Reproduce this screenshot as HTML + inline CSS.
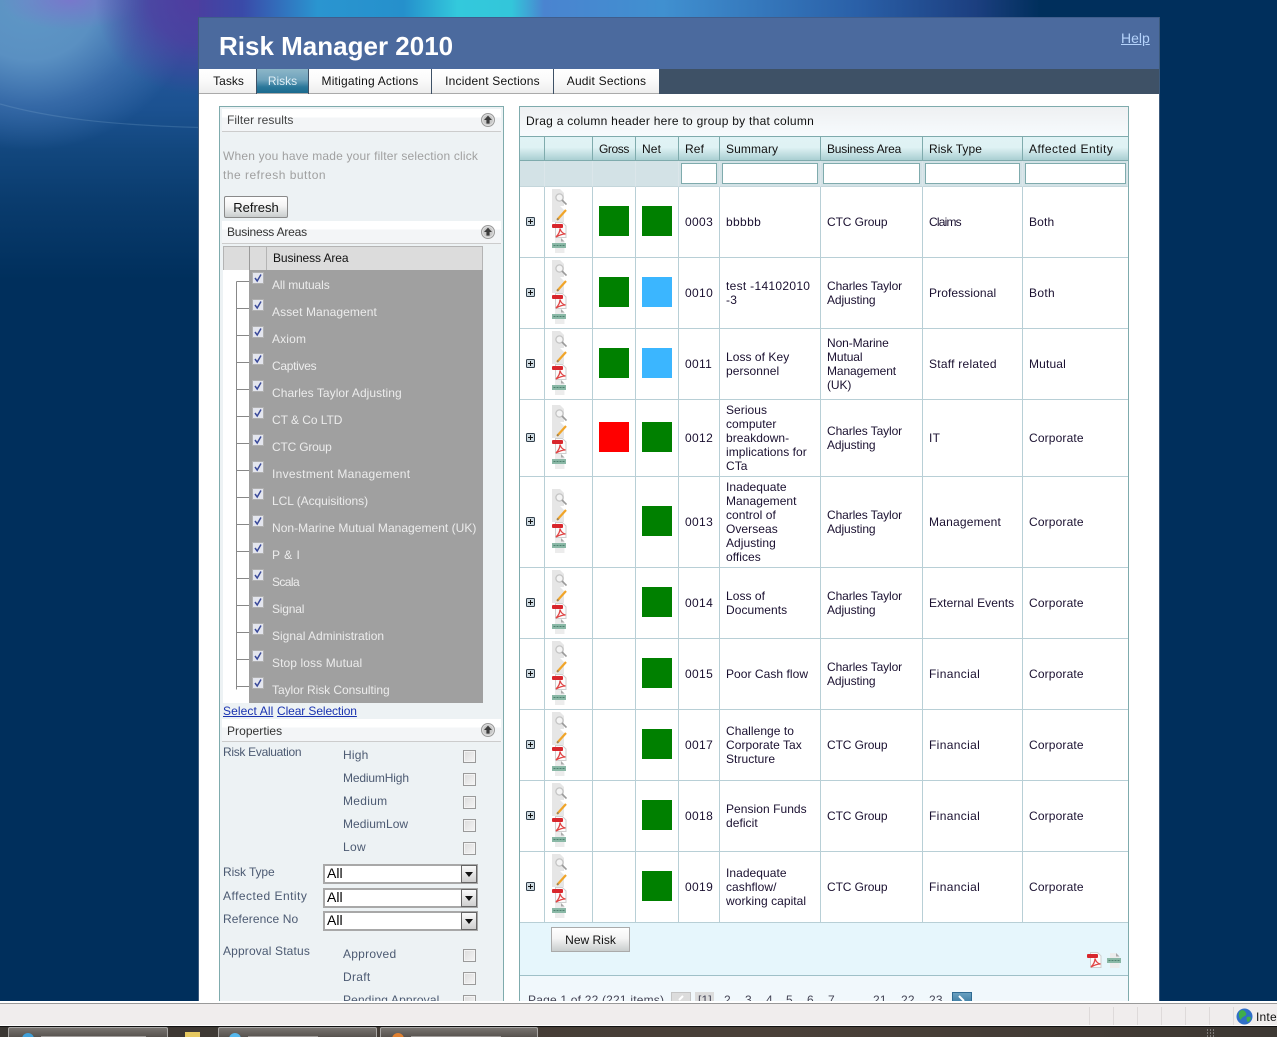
<!DOCTYPE html>
<html><head><meta charset="utf-8"><title>Risk Manager 2010</title>
<style>
html,body{margin:0;padding:0;width:1277px;height:1037px;overflow:hidden;background:#002f5c}
body{font:12px/14px "Liberation Sans",sans-serif;letter-spacing:.2px;color:#222;position:relative}
.a{position:absolute}
.t{position:absolute;white-space:nowrap;line-height:14px}
#left{left:0;top:0;width:199px;height:1001px;background:radial-gradient(ellipse 100px 95px at 195px 0,#4f3da0 0,rgba(79,61,160,.8) 45%,rgba(79,61,160,0) 100%),radial-gradient(ellipse 70px 30px at 70px 0,rgba(125,115,205,.85) 0,rgba(125,115,205,0) 100%),radial-gradient(ellipse 165px 150px at 30px 0,#5f98c6 0,#5a90c2 40%,rgba(75,125,185,.55) 70%,rgba(75,125,185,0) 100%),linear-gradient(#2c5fa6 0,#1b5190 110px,#12477e 150px,#0a3c6e 200px,#002f5c 280px)}
#strip{left:199px;top:0;width:1078px;height:17px;background:linear-gradient(90deg,#4a3fa0 0,#3a4aa8 4%,#2a95d0 11%,#2590cc 19%,#33c9dc 24%,#33c6da 29%,#4a84d0 32%,#4090d0 43%,#2a60a8 61%,#1c3f80 72%,#002f5c 78%)}
#page{left:198px;top:17px;width:962px;height:984px;background:#fff;border-left:1px solid #3c5a7c;border-right:1px solid #3c5a7c;box-sizing:border-box}
#hd{left:199px;top:17px;width:960px;height:52px;background:#4b6a9e;border-top:1px solid #3f5d8c;box-sizing:border-box}
#title{left:219px;top:30px;font-weight:bold;font-size:26px;line-height:32px;color:#fff;letter-spacing:0}
#help{left:1121px;top:31px;font-size:14px;color:#b5d3fb;text-decoration:underline;letter-spacing:0}
#tb{left:199px;top:69px;width:960px;height:25px;background:#3e5166}
.tab{position:absolute;top:69px;height:24px;line-height:25px;text-align:center;background:linear-gradient(#fff 0,#fafafa 50%,#eee 100%);border-bottom:1px solid #aaa;letter-spacing:.2px;color:#111}
.tab.on{background:linear-gradient(#8cb6c8 0,#6fa3bc 45%,#2a779a 75%,#1b6a8e 100%);color:#dfeef5}
#lp{left:219px;top:106px;width:285px;height:900px;box-sizing:border-box;background:#edf2f4;border:1px solid #7fabad}
.sh{position:absolute;left:222px;width:279px;height:23px;box-sizing:border-box;background:linear-gradient(#fff 0,#fff 38%,#f3f5f7 38%,#f3f5f7 100%);border-bottom:1px solid #ccc}
.col{position:absolute;left:481px}
.hint{color:#a0a0a0}
.lbl{color:#4c5a72}
.btn{position:absolute;box-sizing:border-box;border:1px solid #8a8a8a;border-radius:2px;background:linear-gradient(#fff 0,#f4f4f4 45%,#c9cdcd 100%);text-align:center;color:#111;letter-spacing:0}
.ck{position:absolute;left:463px;width:13px;height:13px;box-sizing:border-box;border:1px solid #9a9a9a;background:linear-gradient(135deg,#dcdcdc,#f5f5f5);box-shadow:inset 0 0 0 1px #f4f4f4}
.sel{position:absolute;left:323px;width:155px;height:20px;box-sizing:border-box;background:#fff;border:2px solid #a8a8a8;font-size:14px;line-height:15px;padding-left:2px;color:#000;letter-spacing:0}
.sel i{position:absolute;right:-1px;top:-1px;width:16px;height:18px;background:linear-gradient(#fafafa,#cfcfcf);border:1px solid #666;box-sizing:border-box}
.sel i:after{content:"";position:absolute;left:3px;top:6px;border:4px solid transparent;border-top:5px solid #111;border-bottom:0}
#grid{position:absolute;left:223px;top:270px;width:26px;height:433px;background:#fff}
#rp{left:519px;top:106px;width:610px;height:900px;box-sizing:border-box;background:#fff;border:1px solid #7fabad}
#grp{left:520px;top:107px;width:608px;height:29px;background:linear-gradient(#eef0f2,#f7fbfd);border-bottom:1px solid #7fabad;line-height:29px;color:#111;letter-spacing:.27px}
table{position:absolute;left:520px;top:137px;width:608px;table-layout:fixed;border-collapse:separate;border-spacing:0}
td,th{padding:0 0 0 6px;box-sizing:border-box;vertical-align:middle;font-weight:normal;text-align:left;border-right:1px solid #b8cfd6;border-bottom:1px solid #b8cfd6;color:#1a1030;overflow:hidden;white-space:nowrap}
td:last-child,th:last-child{border-right:0}
tr.h th{height:24px;background:linear-gradient(#e0f3f5 0,#dff2f4 45%,#aacfd2 100%);border-bottom:1px solid #7fabad;border-right:1px solid #7fabad;color:#111;letter-spacing:.12px}
tr.h th:last-child{border-right:0;letter-spacing:.48px}
tr.f td{height:26px;background:#d3e2e6;padding:0;position:relative;border-right:1px solid #dbe6ea;border-bottom:1px solid #c4d6db}
tr.f b{position:absolute;top:2px;left:2px;height:21px;background:#fff;border:1px solid #7fabad;box-sizing:border-box}
tr.r td{height:71px}
tr.r td:nth-child(5){letter-spacing:.35px}
tr.r td:nth-child(6){letter-spacing:.05px}
tr.r td:nth-child(7){letter-spacing:-.1px}
tr.r td:nth-child(8){letter-spacing:.3px}
tr.r td:nth-child(9){letter-spacing:.15px}
.sq{display:block;width:30px;height:30px;position:relative;top:-1px}
.g{background:#008000}.b{background:#3bb6ff}.x{background:#ff0000}
.exp{display:block;width:9px;height:9px;position:relative;top:-1px}
td.ic{padding:0 0 0 7px}
.st{display:block;width:15px;height:64px;position:relative;top:-1px}
#cmd{left:520px;top:923px;width:608px;height:52px;background:#e6f6fc;border-bottom:1px solid #9fc0c8}
#pg{left:520px;top:976px;width:608px;height:26px;background:#f1f8fc}
#sb{left:0;top:1001px;width:1277px;height:26px;box-sizing:border-box;background:#f0eded;border-top:2px solid #fff}
#sb:before{content:"";position:absolute;left:0;top:0;width:100%;height:1px;background:#999}
#sb u{position:absolute;top:4px;width:1px;height:19px;background:#dedada}
#sb:after{content:"";position:absolute;left:0;bottom:0;width:100%;height:2px;background:#fff}
#tk{left:0;top:1026px;width:1277px;height:11px;background:linear-gradient(90deg,#3a3632,#4a4038 60%,#3d3833);border-top:1px solid #111;box-sizing:border-box}
.tb{position:absolute;top:0;height:12px;box-sizing:border-box;background:linear-gradient(#77736f,#504b47);border:1px solid #a8a6a4;border-bottom:0;border-radius:2px 2px 0 0}
.tb s{position:absolute;top:8px;height:2px;background:#d8d6d4;opacity:.55}
.tb em{position:absolute;top:5px;width:12px;height:6px;border-radius:6px 6px 0 0}
</style></head><body>
<svg width="0" height="0" style="position:absolute">
<defs>
<symbol id="c" viewBox="0 0 14 14"><circle cx="7" cy="7" r="6.500" fill="#e0e0e0" stroke="#9a9a9a"/><circle cx="7" cy="7" r="5" fill="#c8c8c8"/><path d="M7 2.600L11 7H8.600v3.600H5.400V7H3z" fill="#3c3c3c"/></symbol>
<symbol id="k" viewBox="0 0 12 12"><rect x=".5" y=".5" width="11" height="11" fill="#e4e6ee" stroke="#b0b0b0"/><path d="M3 6l2.200 3L9 2.500" fill="none" stroke="#3a4a9a" stroke-width="1.500"/></symbol>
<symbol id="p" viewBox="0 0 9 9"><rect x=".5" y=".5" width="8" height="8" rx="1" fill="#cfdbe2" stroke="#33404c"/><path d="M2 4.500h5M4.500 2v5" stroke="#111" stroke-width="1"/></symbol>
<symbol id="dp" viewBox="0 0 15 16"><path d="M3.500.5h7l3.500 3.500v11.500H3.500z" fill="#fbfbfb" stroke="#cfcfcf"/><rect x="0" y="2" width="11" height="4" rx="1" fill="#d8262c"/><path d="M4 15C7 12 8 9 8 6.500c1 3.500 2.500 5 5.500 5.500-3 0-6 1-9.500 3z" fill="none" stroke="#e04545" stroke-width="1.300"/></symbol>
<symbol id="dx" viewBox="0 0 15 15"><path d="M3 0h6l3.500 3.500V15H3z" fill="#ececec"/><path d="M9 0v3.500h3.500z" fill="#aaa"/><rect x="0" y="5" width="14" height="5" fill="#8ab8a6"/><path d="M1.500 7.500h11" stroke="#4f8270" stroke-dasharray="2 1"/></symbol>
<symbol id="st" viewBox="0 0 15 64">
<path d="M0 0h8l4 4v13H0z" fill="#e6e6e6"/><circle cx="7.500" cy="8.500" r="3.600" fill="#f4f4f4" stroke="#c4c4c4" stroke-width="1.300"/><path d="M10 11l4.500 4.500" stroke="#9a9a9a" stroke-width="1.600"/>
<path d="M0 17h8l4 4v12H0z" fill="#e6e6e6"/><path d="M5 31l9-10" stroke="#f0a428" stroke-width="2.200"/><path d="M5 31l2.200-.600-1.700-1.600z" fill="#777"/>
<path d="M3.500 33.500h7l3.500 3.500v11.500H3.500z" fill="#fbfbfb" stroke="#cfcfcf"/><rect x="0" y="35" width="11" height="4" rx="1" fill="#d8262c"/><path d="M4 48C7 45 8 42 8 39.500c1 3.500 2.500 5 5.500 5.500-3 0-6 1-9.500 3z" fill="none" stroke="#e04545" stroke-width="1.300"/>
<path d="M3 49h6l3.500 3.500V64H3z" fill="#ececec"/><path d="M9 49v3.500h3.500z" fill="#aaa"/><rect x="0" y="54" width="14" height="5" fill="#8ab8a6"/><path d="M1.500 56.500h11" stroke="#4f8270" stroke-dasharray="2 1"/>
</symbol>
</defs>
</svg>
<div class="a" id="left"></div>
<svg class="a" style="left:0;top:0" width="199" height="140"><path d="M0 104C50 118 110 125 199 127.500" fill="none" stroke="#8cb4d8" stroke-opacity=".22" stroke-width="1.200"/></svg>
<div class="a" id="strip"></div>
<div class="a" id="page"></div>
<div class="a" id="hd"></div>
<div class="t" id="title">Risk Manager 2010</div>
<div class="t" id="help">Help</div>
<div class="a" id="tb"></div>
<div class="tab" style="left:199px;width:57px;padding-left:2px;box-sizing:border-box;height:25px;letter-spacing:0">Tasks</div>
<div class="tab on" style="left:257px;width:51px;letter-spacing:0">Risks</div>
<div class="tab" style="left:309px;width:122px">Mitigating Actions</div>
<div class="tab" style="left:432px;width:121px">Incident Sections</div>
<div class="tab" style="left:554px;width:105px">Audit Sections</div>

<div class="a" id="lp"></div>
<div class="sh" style="top:109px"></div><div class="t" style="left:227px;top:113px;color:#444;letter-spacing:.08px">Filter results</div>
<svg class="col" style="top:113px" width="14" height="14"><use href="#c"/></svg>
<div class="t hint" style="left:223px;top:149px;letter-spacing:.18px">When you have made your filter selection click</div>
<div class="t hint" style="left:223px;top:168px;letter-spacing:.5px">the refresh button</div>
<div class="btn" style="left:224px;top:196px;width:64px;height:22px;line-height:22px;font-size:13px">Refresh</div>
<div class="sh" style="top:221px"></div><div class="t" style="left:227px;top:225px;color:#333;letter-spacing:-.2px">Business Areas</div>
<svg class="col" style="top:225px" width="14" height="14"><use href="#c"/></svg>
<div class="a" style="left:223px;top:246px;width:260px;height:24px;background:#dcdcdc;box-sizing:border-box;border:1px solid #b4b4b4;border-bottom:0"></div>
<div class="a" style="left:249px;top:246px;width:1px;height:24px;background:#9a9a9a"></div>
<div class="a" style="left:266px;top:246px;width:1px;height:24px;background:#b4b4b4"></div>
<div class="t" style="left:273px;top:251px;color:#111;letter-spacing:-.1px">Business Area</div>
<div id="grid"></div>
<div class="a" style="left:249px;top:270px;width:234px;height:433px;background:#a0a0a0"></div>
<svg class="a" style="left:223px;top:270px" width="30" height="433"><path d="M13.500 11.500V419.500M13.500 11.500H26M13.500 38.500H26M13.500 65.500H26M13.500 92.500H26M13.500 119.500H26M13.500 146.500H26M13.500 173.500H26M13.500 200.500H26M13.500 227.500H26M13.500 254.500H26M13.500 281.500H26M13.500 308.500H26M13.500 335.500H26M13.500 362.500H26M13.500 389.500H26M13.500 416.500H26" fill="none" stroke="#888"/></svg>
<svg class="a" style="left:252px;top:272px" width="12" height="420">
<use href="#k" y="0" width="12" height="12"/><use href="#k" y="27" width="12" height="12"/><use href="#k" y="54" width="12" height="12"/><use href="#k" y="81" width="12" height="12"/><use href="#k" y="108" width="12" height="12"/><use href="#k" y="135" width="12" height="12"/><use href="#k" y="162" width="12" height="12"/><use href="#k" y="189" width="12" height="12"/><use href="#k" y="216" width="12" height="12"/><use href="#k" y="243" width="12" height="12"/><use href="#k" y="270" width="12" height="12"/><use href="#k" y="297" width="12" height="12"/><use href="#k" y="324" width="12" height="12"/><use href="#k" y="351" width="12" height="12"/><use href="#k" y="378" width="12" height="12"/><use href="#k" y="405" width="12" height="12"/>
</svg>
<div style="color:#ececec">
<div class="t" style="left:272px;top:278px;letter-spacing:-.1px">All mutuals</div>
<div class="t" style="left:272px;top:305px;letter-spacing:.1px">Asset Management</div>
<div class="t" style="left:272px;top:332px;letter-spacing:.15px">Axiom</div>
<div class="t" style="left:272px;top:359px;letter-spacing:-.3px">Captives</div>
<div class="t" style="left:272px;top:386px;letter-spacing:.05px">Charles Taylor Adjusting</div>
<div class="t" style="left:272px;top:413px;letter-spacing:-.05px">CT &amp; Co LTD</div>
<div class="t" style="left:272px;top:440px;letter-spacing:-.2px">CTC Group</div>
<div class="t" style="left:272px;top:467px;letter-spacing:.3px">Investment Management</div>
<div class="t" style="left:272px;top:494px;letter-spacing:-.05px">LCL (Acquisitions)</div>
<div class="t" style="left:272px;top:521px;letter-spacing:.03px">Non-Marine Mutual Management (UK)</div>
<div class="t" style="left:272px;top:548px;letter-spacing:.5px">P &amp; I</div>
<div class="t" style="left:272px;top:575px;letter-spacing:-.6px">Scala</div>
<div class="t" style="left:272px;top:602px;letter-spacing:-.2px">Signal</div>
<div class="t" style="left:272px;top:629px;letter-spacing:0">Signal Administration</div>
<div class="t" style="left:272px;top:656px;letter-spacing:.1px">Stop loss Mutual</div>
<div class="t" style="left:272px;top:683px;letter-spacing:-.05px">Taylor Risk Consulting</div>
</div>
<div class="t" style="left:223px;top:704px;color:#1a33b0;text-decoration:underline;letter-spacing:.1px">Select All</div>
<div class="t" style="left:277px;top:704px;color:#1a33b0;text-decoration:underline;letter-spacing:-.1px">Clear Selection</div>
<div class="sh" style="top:719px"></div><div class="t" style="left:227px;top:724px;color:#333;letter-spacing:.05px">Properties</div>
<svg class="col" style="top:723px" width="14" height="14"><use href="#c"/></svg>
<div class="lbl">
<div class="t" style="left:223px;top:745px;letter-spacing:-.3px">Risk Evaluation</div>
<div class="t" style="left:343px;top:748px">High</div>
<div class="t" style="left:343px;top:771px;letter-spacing:-.15px">MediumHigh</div>
<div class="t" style="left:343px;top:794px;letter-spacing:.3px">Medium</div>
<div class="t" style="left:343px;top:817px;letter-spacing:.05px">MediumLow</div>
<div class="t" style="left:343px;top:840px;letter-spacing:.3px">Low</div>
<div class="t" style="left:223px;top:865px;letter-spacing:-.1px">Risk Type</div>
<div class="t" style="left:223px;top:889px;letter-spacing:.48px">Affected Entity</div>
<div class="t" style="left:223px;top:912px;letter-spacing:.1px">Reference No</div>
<div class="t" style="left:223px;top:944px;letter-spacing:.15px">Approval Status</div>
<div class="t" style="left:343px;top:947px;letter-spacing:.25px">Approved</div>
<div class="t" style="left:343px;top:970px;letter-spacing:.3px">Draft</div>
<div class="t" style="left:343px;top:993px;letter-spacing:.15px">Pending Approval</div>
</div>
<div class="ck" style="top:750px"></div><div class="ck" style="top:773px"></div><div class="ck" style="top:796px"></div><div class="ck" style="top:819px"></div><div class="ck" style="top:842px"></div>
<div class="ck" style="top:949px"></div><div class="ck" style="top:972px"></div><div class="ck" style="top:995px"></div>
<div class="sel" style="top:864px">All<i></i></div>
<div class="sel" style="top:888px">All<i></i></div>
<div class="sel" style="top:911px">All<i></i></div>

<div class="a" id="rp"></div>
<div class="a" id="grp"><span style="margin-left:6px">Drag a column header here to group by that column</span></div>
<table>
<colgroup><col style="width:25px"><col style="width:48px"><col style="width:43px"><col style="width:43px"><col style="width:41px"><col style="width:101px"><col style="width:102px"><col style="width:100px"><col style="width:105px"></colgroup>
<tr class="h"><th></th><th></th><th style="letter-spacing:-.4px">Gross</th><th>Net</th><th>Ref</th><th>Summary</th><th style="letter-spacing:-.2px">Business Area</th><th style="letter-spacing:.05px">Risk Type</th><th>Affected Entity</th></tr>
<tr class="f"><td></td><td></td><td></td><td></td><td><b style="width:36px"></b></td><td><b style="width:96px"></b></td><td><b style="width:97px"></b></td><td><b style="width:95px"></b></td><td><b style="width:101px"></b></td></tr>
<tr class="r"><td><svg class="exp"><use href="#p"/></svg></td><td class="ic"><svg class="st"><use href="#st"/></svg></td><td><span class="sq g"></span></td><td><span class="sq g"></span></td><td>0003</td><td style="letter-spacing:.35px">bbbbb</td><td>CTC Group</td><td style="letter-spacing:-.8px">Claims</td><td>Both</td></tr>
<tr class="r"><td><svg class="exp"><use href="#p"/></svg></td><td class="ic"><svg class="st"><use href="#st"/></svg></td><td><span class="sq g"></span></td><td><span class="sq b"></span></td><td>0010</td><td style="letter-spacing:.3px">test -14102010<br>-3</td><td>Charles Taylor<br>Adjusting</td><td style="letter-spacing:.1px">Professional</td><td style="letter-spacing:.35px">Both</td></tr>
<tr class="r"><td><svg class="exp"><use href="#p"/></svg></td><td class="ic"><svg class="st"><use href="#st"/></svg></td><td><span class="sq g"></span></td><td><span class="sq b"></span></td><td>0011</td><td>Loss of Key<br>personnel</td><td>Non-Marine<br>Mutual<br>Management<br>(UK)</td><td style="letter-spacing:.25px">Staff related</td><td>Mutual</td></tr>
<tr class="r"><td style="height:77px"><svg class="exp"><use href="#p"/></svg></td><td class="ic" style="height:77px"><svg class="st"><use href="#st"/></svg></td><td style="height:77px"><span class="sq x"></span></td><td style="height:77px"><span class="sq g"></span></td><td style="height:77px">0012</td><td style="height:77px">Serious<br>computer<br>breakdown-<br>implications for<br>CTa</td><td style="height:77px">Charles Taylor<br>Adjusting</td><td style="height:77px">IT</td><td style="height:77px">Corporate</td></tr>
<tr class="r"><td style="height:91px"><svg class="exp"><use href="#p"/></svg></td><td class="ic" style="height:91px"><svg class="st"><use href="#st"/></svg></td><td style="height:91px"></td><td style="height:91px"><span class="sq g"></span></td><td style="height:91px">0013</td><td style="height:91px">Inadequate<br>Management<br>control of<br>Overseas<br>Adjusting<br>offices</td><td style="height:91px">Charles Taylor<br>Adjusting</td><td style="height:91px;letter-spacing:.2px">Management</td><td style="height:91px">Corporate</td></tr>
<tr class="r"><td><svg class="exp"><use href="#p"/></svg></td><td class="ic"><svg class="st"><use href="#st"/></svg></td><td></td><td><span class="sq g"></span></td><td>0014</td><td>Loss of<br>Documents</td><td>Charles Taylor<br>Adjusting</td><td style="letter-spacing:.08px">External Events</td><td>Corporate</td></tr>
<tr class="r"><td><svg class="exp"><use href="#p"/></svg></td><td class="ic"><svg class="st"><use href="#st"/></svg></td><td></td><td><span class="sq g"></span></td><td>0015</td><td>Poor Cash flow</td><td>Charles Taylor<br>Adjusting</td><td style="letter-spacing:.35px">Financial</td><td>Corporate</td></tr>
<tr class="r"><td><svg class="exp"><use href="#p"/></svg></td><td class="ic"><svg class="st"><use href="#st"/></svg></td><td></td><td><span class="sq g"></span></td><td>0017</td><td>Challenge to<br>Corporate Tax<br>Structure</td><td>CTC Group</td><td style="letter-spacing:.35px">Financial</td><td>Corporate</td></tr>
<tr class="r"><td><svg class="exp"><use href="#p"/></svg></td><td class="ic"><svg class="st"><use href="#st"/></svg></td><td></td><td><span class="sq g"></span></td><td>0018</td><td>Pension Funds<br>deficit</td><td>CTC Group</td><td style="letter-spacing:.35px">Financial</td><td>Corporate</td></tr>
<tr class="r"><td><svg class="exp"><use href="#p"/></svg></td><td class="ic"><svg class="st"><use href="#st"/></svg></td><td></td><td><span class="sq g"></span></td><td>0019</td><td>Inadequate<br>cashflow/<br>working capital</td><td>CTC Group</td><td style="letter-spacing:.35px">Financial</td><td>Corporate</td></tr>
</table>
<div class="a" id="cmd"></div>
<div class="btn" style="left:551px;top:927px;width:79px;height:25px;line-height:25px;border-color:#aaa;border-radius:0">New Risk</div>
<svg class="a" style="left:1087px;top:952px" width="15" height="16"><use href="#dp"/></svg>
<svg class="a" style="left:1107px;top:953px" width="15" height="15"><use href="#dx"/></svg>
<div class="a" id="pg"></div>
<div class="t" style="left:528px;top:993px;color:#445">Page 1 of 22 (221 items)</div>
<div class="a" style="left:671px;top:992px;width:20px;height:12px;box-sizing:border-box;background:#dcdcdc;border:1px solid #c4c4c4"></div>
<svg class="a" style="left:675px;top:995px" width="12" height="7"><path d="M8 1L4 5" stroke="#fff" stroke-width="2"/></svg>
<div class="a" style="left:695px;top:992px;width:19px;height:12px;background:#dcdcdc"></div>
<div class="t" style="left:698px;top:993px;color:#445">[1]</div>
<div class="t" style="left:724px;top:993px;color:#445">2</div>
<div class="t" style="left:745px;top:993px;color:#445">3</div>
<div class="t" style="left:766px;top:993px;color:#445">4</div>
<div class="t" style="left:786px;top:993px;color:#445">5</div>
<div class="t" style="left:807px;top:993px;color:#445">6</div>
<div class="t" style="left:828px;top:993px;color:#445">7</div>
<div class="t" style="left:873px;top:993px;color:#445">21</div>
<div class="t" style="left:901px;top:993px;color:#445">22</div>
<div class="t" style="left:929px;top:993px;color:#445">23</div>
<div class="a" style="left:952px;top:992px;width:20px;height:12px;box-sizing:border-box;background:linear-gradient(#6aa0c0,#3d7ca3);border:1px solid #2f6a92"></div>
<svg class="a" style="left:956px;top:995px" width="12" height="7"><path d="M3 1l5 5" stroke="#fff" stroke-width="2"/></svg>

<div class="a" id="sb">
<u style="left:1089px"></u><u style="left:1113px"></u><u style="left:1137px"></u><u style="left:1161px"></u><u style="left:1185px"></u><u style="left:1209px"></u><u style="left:1233px"></u>
<svg class="a" style="left:1236px;top:5px" width="17" height="17"><circle cx="8.500" cy="8.500" r="8" fill="#2f6fc8"/><path d="M4 3c3-2 5 0 6 2s-1 3-3 4-2 4-3 2-2-6 0-8zM11 9c2-1 4 0 4 1s-2 4-3 4-2-4-1-5z" fill="#3fae4a"/></svg>
<div class="t" style="left:1256px;top:7px;color:#111">Internet</div>
</div>
<div class="a" id="tk">
<div class="tb" style="left:8px;width:160px"><em style="left:13px;background:#3f9fd8"></em><s style="left:32px;width:105px"></s></div>
<div class="a" style="left:185px;top:5px;width:15px;height:6px;background:#e6c860"></div>
<div class="tb" style="left:218px;width:159px"><em style="left:10px;background:#55b8ee"></em><s style="left:29px;width:70px"></s></div>
<div class="tb" style="left:380px;width:158px"><em style="left:11px;background:#e08030"></em><s style="left:30px;width:90px"></s></div>
<svg class="a" style="left:1206px;top:1px" width="12" height="9"><path d="M1 2h8M1 5h8M1 8h8" stroke="#bbb" stroke-dasharray="1 2"/></svg>
</div>
</body></html>
